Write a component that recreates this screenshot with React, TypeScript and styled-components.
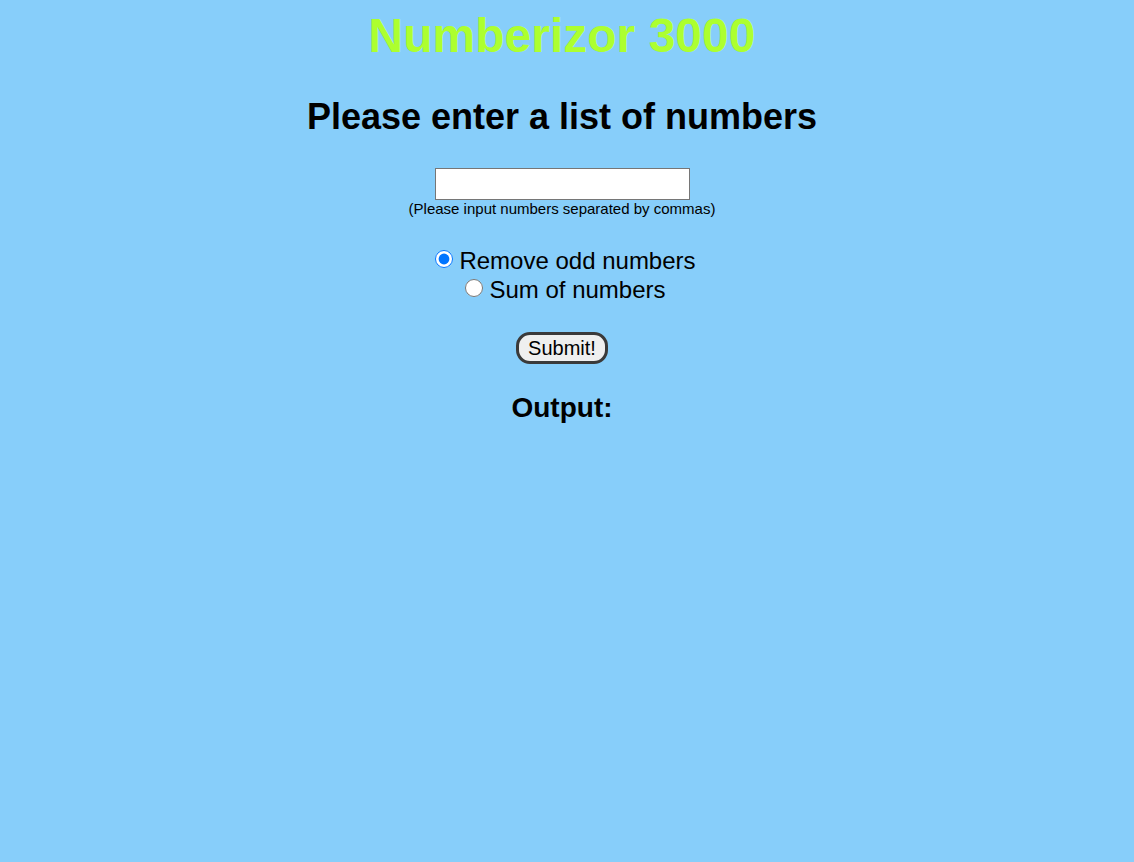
import React from "react";
import styled, { createGlobalStyle } from "styled-components";

const Global = createGlobalStyle`
  html, body { margin: 0; padding: 0; background: #87cefa; }
  body { font-family: "Liberation Sans", Arial, sans-serif; min-height: 862px; }
`;

const Page = styled.main`
  display: flex;
  flex-direction: column;
  align-items: center;
  text-align: center;
  width: 1124px;
`;

const Title = styled.h1`
  margin: 8px 0 0;
  font-size: 48px;
  line-height: 56px;
  font-weight: bold;
  color: #adff2f;
`;

const Heading = styled.h2`
  margin: 32px 0 0;
  font-size: 36px;
  line-height: 42px;
  font-weight: bold;
  color: #000;
`;

const Form = styled.form`
  display: flex;
  flex-direction: column;
  align-items: center;
  margin-top: 30px;
`;

const TextInput = styled.input`
  box-sizing: border-box;
  width: 255px;
  height: 32px;
  border: 1px solid #767676;
  background: #fff;
  padding: 2px 4px;
  font-size: 16px;
  font-family: inherit;
`;

const Hint = styled.small`
  font-size: 15px;
  line-height: 17px;
  color: #000;
`;

const Options = styled.div`
  display: flex;
  flex-direction: column;
  align-items: center;
  margin-top: 29px;
`;

const OptionLabel = styled.label`
  display: flex;
  align-items: center;
  font-size: 24px;
  line-height: 29px;
  color: #000;
`;

const Radio = styled.input`
  margin: 0 6px 0 7px;
  width: 18px;
  height: 18px;
  position: relative;
  top: -2px;
`;

const SubmitButton = styled.button`
  margin-top: 28px;
  font-family: inherit;
  font-size: 20px;
  line-height: 22px;
  padding: 2px 9px;
  border: 3px solid #3a3a3a;
  border-radius: 14px;
  background: #efefef;
  color: #000;
`;

const OutputTitle = styled.h3`
  margin: 28px 0 0;
  font-size: 28px;
  line-height: 32px;
  font-weight: bold;
`;

export default function App() {
  return (
    <>
      <Global />
      <Page>
        <Title>Numberizor 3000</Title>
        <Heading>Please enter a list of numbers</Heading>
        <Form onSubmit={(e) => e.preventDefault()}>
          <TextInput type="text" />
          <Hint>(Please input numbers separated by commas)</Hint>
          <Options>
            <OptionLabel>
              <Radio type="radio" name="op" defaultChecked />
              Remove odd numbers
            </OptionLabel>
            <OptionLabel>
              <Radio type="radio" name="op" />
              Sum of numbers
            </OptionLabel>
          </Options>
          <SubmitButton type="submit">Submit!</SubmitButton>
        </Form>
        <OutputTitle>Output:</OutputTitle>
      </Page>
    </>
  );
}
